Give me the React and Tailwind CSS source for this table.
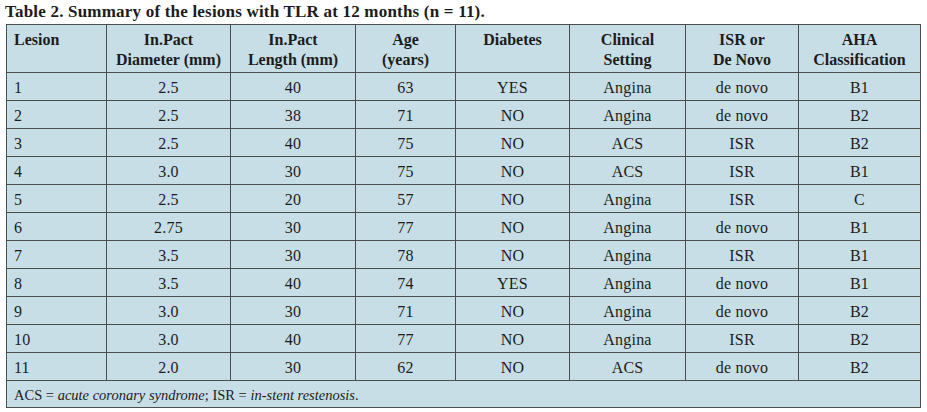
// Table 2 — lesions with TLR at 12 months
const COLS = [100, 124, 125, 100, 114, 116, 113, 122]

const HEAD = [
  ['Lesion'],
  ['In.Pact', 'Diameter (mm)'],
  ['In.Pact', 'Length (mm)'],
  ['Age', '(years)'],
  ['Diabetes'],
  ['Clinical', 'Setting'],
  ['ISR or', 'De Novo'],
  ['AHA', 'Classification'],
]

const ROWS = [
  ['1', '2.5', '40', '63', 'YES', 'Angina', 'de novo', 'B1'],
  ['2', '2.5', '38', '71', 'NO', 'Angina', 'de novo', 'B2'],
  ['3', '2.5', '40', '75', 'NO', 'ACS', 'ISR', 'B2'],
  ['4', '3.0', '30', '75', 'NO', 'ACS', 'ISR', 'B1'],
  ['5', '2.5', '20', '57', 'NO', 'Angina', 'ISR', 'C'],
  ['6', '2.75', '30', '77', 'NO', 'Angina', 'de novo', 'B1'],
  ['7', '3.5', '30', '78', 'NO', 'Angina', 'ISR', 'B1'],
  ['8', '3.5', '40', '74', 'YES', 'Angina', 'de novo', 'B1'],
  ['9', '3.0', '30', '71', 'NO', 'Angina', 'de novo', 'B2'],
  ['10', '3.0', '40', '77', 'NO', 'Angina', 'ISR', 'B2'],
  ['11', '2.0', '30', '62', 'NO', 'ACS', 'de novo', 'B2'],
]

export default function App() {
  return (
    <div className="h-[412px] w-[927px] bg-white font-[family-name:Liberation_Serif,serif] text-[#1c1c1c]">
      {/* 表题 */}
      <h2 className="h-[24px] pl-[5px] pt-[1px] text-[17px] font-bold leading-[22px] tracking-[0.2px]">
        Table 2. Summary of the lesions with TLR at 12 months (n = 11).
      </h2>

      <table className="ml-[6px] table-fixed border-collapse bg-[#c7dee6] text-[16px]">
        <colgroup>
          {COLS.map((w, i) => (
            <col key={i} style={{ width: w }} />
          ))}
        </colgroup>
        <thead>
          <tr className="h-[48px]">
            {HEAD.map((lines, i) => (
              <th
                key={i}
                className={`whitespace-nowrap border border-[#4d4d4d] px-[7px] pt-[5px] align-top font-bold leading-[20px] ${
                  i === 0 ? 'text-left' : 'text-center'
                }`}
              >
                {lines.map((l, j) => (
                  <div key={j}>{l}</div>
                ))}
              </th>
            ))}
          </tr>
        </thead>
        <tbody>
          {ROWS.map((row, r) => (
            <tr key={r} className="h-[28px]">
              {row.map((cell, i) => (
                <td
                  key={i}
                  className={`border border-[#4d4d4d] px-[7px] pt-[2px] leading-[20px] tracking-[0.2px] ${
                    i === 0 ? 'text-left' : 'text-center'
                  }`}
                >
                  {cell}
                </td>
              ))}
            </tr>
          ))}
          {/* 缩写说明 */}
          <tr className="h-[27px]">
            <td colSpan={8} className="border border-[#4d4d4d] px-[7px] pt-[1px] text-[14.5px] leading-[20px]">
              ACS = <i>acute coronary syndrome</i>; ISR = <i>in-stent restenosis</i>.
            </td>
          </tr>
        </tbody>
      </table>
    </div>
  )
}
